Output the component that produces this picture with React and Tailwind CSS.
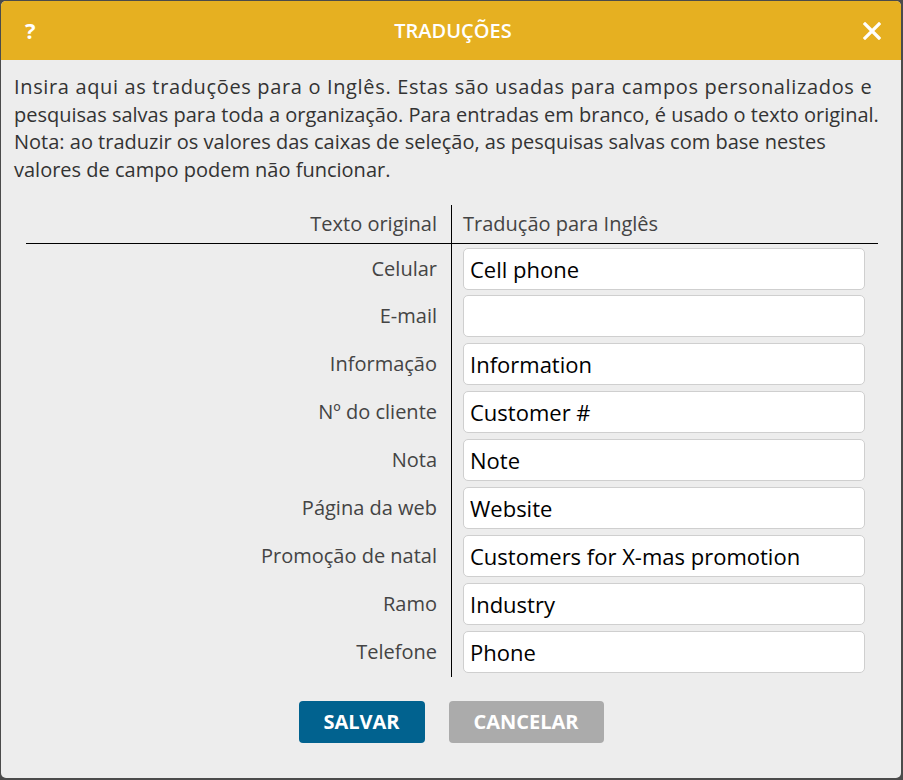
import React, { useState } from "react";

const rows = [
  { label: "Celular", value: "Cell phone" },
  { label: "E-mail", value: "" },
  { label: "Informação", value: "Information" },
  { label: "Nº do cliente", value: "Customer #" },
  { label: "Nota", value: "Note" },
  { label: "Página da web", value: "Website" },
  { label: "Promoção de natal", value: "Customers for X-mas promotion" },
  { label: "Ramo", value: "Industry" },
  { label: "Telefone", value: "Phone" },
];

const introLines = [
  "Insira aqui as traduções para o Inglês. Estas são usadas para campos personalizados e",
  "pesquisas salvas para toda a organização. Para entradas em branco, é usado o texto original.",
  "Nota: ao traduzir os valores das caixas de seleção, as pesquisas salvas com base nestes",
  "valores de campo podem não funcionar.",
];

const TranslationsDialog = () => {
  const [values, setValues] = useState(rows.map((r) => r.value));

  const updateValue = (i, v) => {
    setValues((prev) => prev.map((x, j) => (j === i ? v : x)));
  };

  return (
    <div className="h-[780px] w-[903px] bg-[#4b4b4b] pl-px pt-px font-['Open_Sans',sans-serif]">
      <div className="flex h-[777px] w-[900px] flex-col overflow-hidden rounded-[5px] bg-[#ededed]">
        {/* Header */}
        <div className="flex h-[59px] items-center justify-between bg-[#e6b021] pl-[24px] pr-[20px] text-white">
          <span className="w-[20px] text-[22px] font-bold">?</span>
          <h1 className="text-[20px] font-semibold">TRADUÇÕES</h1>
          <span className="flex w-[20px] justify-end">
            <svg width="18" height="18" viewBox="0 0 18 18">
              <path d="M2 2 L16 16 M16 2 L2 16" stroke="white" strokeWidth="3.2" strokeLinecap="square" />
            </svg>
          </span>
        </div>

        {/* Intro */}
        <p className="px-[13px] pt-[13px] text-[20px] leading-[27.5px] text-[#333]">
          {introLines.map((line, i) => (
            <span key={line} className={`block whitespace-nowrap ${i === 0 ? "tracking-[0.65px]" : ""}`}>
              {line}
            </span>
          ))}
        </p>

        {/* Table */}
        <div className="mx-[25px] mt-[22px] grid w-[852px] grid-cols-2 text-[20px] text-[#444]">
          <div className="flex h-[39px] items-center justify-end border-r border-b border-black pr-[14px]">
            Texto original
          </div>
          <div className="flex h-[39px] items-center border-b border-black pl-[11px]">
            Tradução para Inglês
          </div>
          {rows.map((row, i) => (
            <React.Fragment key={row.label}>
              <div
                className={`flex h-[48px] items-center justify-end border-r border-black pr-[14px] ${
                  i === 0 ? "pt-[2px]" : ""
                }`}
              >
                {row.label}
              </div>
              <div className={`flex h-[48px] items-center pl-[11px] pr-[13px] ${i === 0 ? "pt-[2px]" : ""}`}>
                <input
                  type="text"
                  value={values[i]}
                  onChange={(e) => updateValue(i, e.target.value)}
                  className="h-[42px] w-full rounded-[5px] border border-[#cfcfcf] bg-white px-[6px] text-[22px] text-black outline-none"
                />
              </div>
            </React.Fragment>
          ))}
          <div className="h-px border-r border-black" />
          <div className="h-px" />
        </div>

        {/* Buttons */}
        <div className="mt-[24px] flex justify-center gap-[24px]">
          <button className="h-[42px] w-[126px] rounded-[4px] bg-[#01628f] text-[20px] font-bold text-white">
            SALVAR
          </button>
          <button className="h-[42px] w-[155px] rounded-[4px] bg-[#ababab] text-[20px] font-bold text-white">
            CANCELAR
          </button>
        </div>
      </div>
    </div>
  );
};

export default function App() {
  return <TranslationsDialog />;
}
